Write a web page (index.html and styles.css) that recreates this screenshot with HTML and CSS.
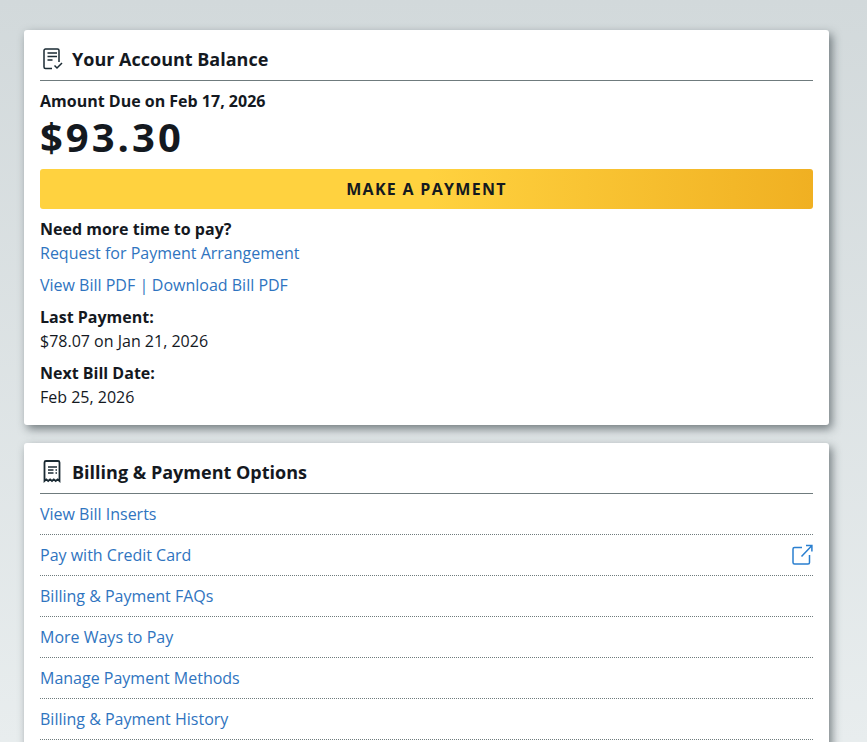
FILE: index.html
```html
<!DOCTYPE html>
<html lang="en">
<head>
    <meta charset="UTF-8">
    <meta name="viewport" content="width=device-width, initial-scale=1.0">
    <title>Billing</title>
    <link rel="stylesheet" href="styles.css">
</head>
<body>
    <div class="container">
        <section class="card balance">
            <div class="card-title">
                <svg class="title-icon" width="24" height="24" viewBox="0 0 24 24" fill="none" stroke="#1a2a33" stroke-width="1.500">
                    <path d="M11 22.500H4.500A1.500 1.500 0 0 1 3 21V4.500A1.500 1.500 0 0 1 4.500 3h12A1.500 1.500 0 0 1 18 4.500V16"/>
                    <path d="M6.500 7h9.500M6.500 10.500h9.500M6.500 14h5"/>
                    <path d="M13.500 19.500l2.500 2.500 5-5"/>
                </svg>
                <h2>Your Account Balance</h2>
            </div>
            <div class="due-label">Amount Due on Feb 17, 2026</div>
            <div class="due-amount">$93.30</div>
            <button class="pay-btn" type="button">MAKE A PAYMENT</button>
            <div class="label">Need more time to pay?</div>
            <a class="link" href="#">Request for Payment Arrangement</a>
            <div class="bill-links"><a class="link" href="#">View Bill PDF</a> <span class="sep">|</span> <a class="link" href="#">Download Bill PDF</a></div>
            <div class="label">Last Payment:</div>
            <div class="value">$78.07 on Jan 21, 2026</div>
            <div class="label next">Next Bill Date:</div>
            <div class="value">Feb 25, 2026</div>
        </section>

        <section class="card options">
            <div class="card-title">
                <svg class="title-icon" width="24" height="24" viewBox="0 0 24 24" fill="none" stroke="#1a2a33" stroke-width="1.800">
                    <path d="M3.500 22V3.500A1.500 1.500 0 0 1 5 2h12a1.500 1.500 0 0 1 1.500 1.500V22l-1.900-1.600-1.900 1.600-1.900-1.600-1.800 1.600-1.900-1.600-1.900 1.600-1.900-1.600z"/>
                    <path stroke-width="1.400" d="M7 8h9M7 11h5.500M14.500 11H16M7 14h5.500M14.500 14H16"/>
                </svg>
                <h2>Billing &amp; Payment Options</h2>
            </div>
            <ul class="option-list">
                <li><a class="link" href="#">View Bill Inserts</a></li>
                <li>
                    <a class="link" href="#">Pay with Credit Card</a>
                    <svg width="22" height="22" viewBox="0 0 22 22" fill="none" stroke="#2a7fd0" stroke-width="1.500">
                        <path d="M11 3.500H3.500A1.500 1.500 0 0 0 2 5v13.500A1.500 1.500 0 0 0 3.500 20H17a1.500 1.500 0 0 0 1.500-1.500V11"/>
                        <path d="M10.500 12.500L20.500 2M15 1.500h5.900V7.500"/>
                    </svg>
                </li>
                <li><a class="link" href="#">Billing &amp; Payment FAQs</a></li>
                <li><a class="link" href="#">More Ways to Pay</a></li>
                <li><a class="link" href="#">Manage Payment Methods</a></li>
                <li><a class="link" href="#">Billing &amp; Payment History</a></li>
            </ul>
        </section>
    </div>
</body>
</html>
```

FILE: styles.css
```css
html, body {
    height: 742px;
    overflow: hidden;
}
body {
    margin: 0;
    background: linear-gradient(180deg, #d2d9db 0%, #e8edee 100%);
    font-family: "Open Sans", sans-serif;
    font-size: 16px;
    line-height: 24px;
    color: #14191f;
}
.container {
    width: 805px;
    margin-left: 24px;
    padding-top: 30px;
}
.card {
    background-color: #fff;
    border-radius: 3px;
    padding: 12px 16px 16px 16px;
    margin-bottom: 18px;
    box-shadow: 3px 4px 10px rgba(45, 55, 60, 0.6);
}
.card-title {
    display: flex;
    align-items: center;
    gap: 7px;
    padding: 0 0 6px 0;
    height: 32px;
    border-bottom: 1px solid #6f7b7d;
}
.card-title h2 {
    margin: 0;
    padding-top: 2px;
    font-size: 18px;
    font-weight: 700;
    line-height: 32px;
}
.title-icon {
    margin-left: 1px;
}
.due-label {
    font-weight: 700;
    margin-top: 8px;
}
.due-amount {
    font-size: 40px;
    line-height: 48px;
    font-weight: 700;
    letter-spacing: 3px;
}
.pay-btn {
    display: block;
    width: 100%;
    height: 40px;
    margin: 8px 0;
    border: 0;
    border-radius: 3px;
    background: linear-gradient(90deg, #ffd23f 0%, #ffd23f 50%, #f0b022 100%);
    color: #14191f;
    font-family: inherit;
    font-size: 16px;
    font-weight: 700;
    letter-spacing: 1.3px;
    cursor: pointer;
}
.label {
    font-weight: 700;
}
.link {
    color: #2f74c0;
    text-decoration: none;
}
.bill-links {
    margin: 8px 0;
}
.sep {
    color: #2f74c0;
    margin-right: -0.5px;
}
.next {
    margin-top: 8px;
}
.option-list {
    list-style: none;
    margin: 0;
    padding: 0;
}
.option-list li {
    display: flex;
    justify-content: space-between;
    align-items: center;
    height: 40px;
    border-bottom: 1px dotted #6f7b7d;
}
```
